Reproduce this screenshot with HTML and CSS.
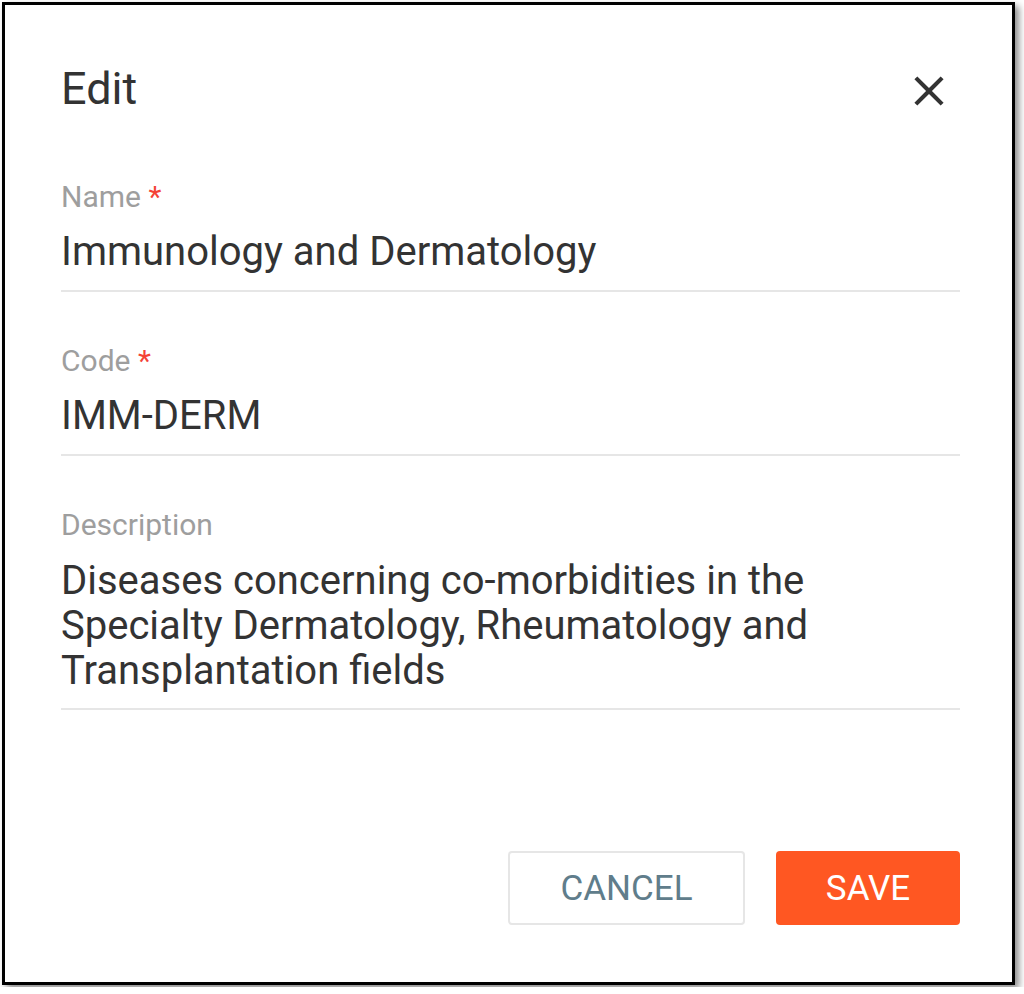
FILE: index.html
```html
<!DOCTYPE html>
<html lang="en">
<head>
<meta charset="utf-8">
<title>Edit</title>
<link rel="stylesheet" href="styles.css">
</head>
<body>
<div class="frame">
  <div class="dialog">
    <div class="dialog-header">
      <h1 class="dialog-title">Edit</h1>
      <button class="close-btn" aria-label="Close">
        <svg viewBox="0 0 24 24" width="50" height="50"><path fill="#333" d="M19 6.41L17.59 5 12 10.59 6.41 5 5 6.41 10.59 12 5 17.59 6.41 19 12 13.41 17.59 19 19 17.59 13.41 12z"/></svg>
      </button>
    </div>
    <div class="field">
      <div class="label">Name <span class="req">*</span></div>
      <div class="value">Immunology and Dermatology</div>
    </div>
    <div class="field">
      <div class="label">Code <span class="req">*</span></div>
      <div class="value">IMM-DERM</div>
    </div>
    <div class="field field-desc">
      <div class="label">Description</div>
      <div class="value value-multi">Diseases concerning co-morbidities in the<br>Specialty Dermatology, Rheumatology and<br>Transplantation fields</div>
    </div>
    <div class="actions">
      <button class="btn btn-cancel">CANCEL</button>
      <button class="btn btn-save">SAVE</button>
    </div>
  </div>
</div>
</body>
</html>
```
FILE: styles.css
```css
html, body {
  margin: 0;
  padding: 0;
  background: #fff;
}
body {
  font-family: Roboto, "Noto Sans", "Liberation Sans", sans-serif;
  color: #333;
}
.frame {
  box-sizing: border-box;
  margin: 2px;
  width: 1013px;
  height: 983px;
  border: 3px solid #000;
  background: #fff;
  box-shadow: 4px 4px 7px rgba(0, 0, 0, 0.45);
}
.dialog {
  box-sizing: border-box;
  height: 100%;
  display: flex;
  flex-direction: column;
  padding: 58.6px 52px 57px 56px;
}
.dialog-header {
  display: flex;
  justify-content: space-between;
  align-items: flex-start;
  margin-bottom: 64px;
}
.dialog-title {
  margin: 0;
  font-size: 45px;
  line-height: 50px;
  font-weight: 400;
  color: #333;
}
.close-btn {
  border: 0;
  background: none;
  padding: 0;
  margin: 2px 6px 0 0;
  width: 50px;
  height: 50px;
  cursor: pointer;
}
.close-btn svg {
  display: block;
}
.field {
  border-bottom: 2px solid #e6e6e6;
  padding-bottom: 14px;
}
.field + .field {
  margin-top: 52px;
}
.label {
  font-size: 30px;
  line-height: 34px;
  color: #9e9e9e;
  margin-bottom: 14px;
}
.req {
  color: #f44336;
}
.value {
  font-size: 40px;
  line-height: 48px;
  color: #333;
}
.value-multi {
  line-height: 45px;
}
.field-desc {
  padding-bottom: 15px;
}
.field-desc .label {
  margin-bottom: 16px;
}
.actions {
  margin-top: auto;
  display: flex;
  justify-content: flex-end;
  gap: 31px;
}
.btn {
  font-family: Roboto, "Noto Sans", "Liberation Sans", sans-serif;
  font-size: 35px;
  font-weight: 400;
  height: 74px;
  border-radius: 4px;
  cursor: pointer;
  padding: 0;
}
.btn-cancel {
  width: 237px;
  background: #fff;
  border: 2px solid #e6e6e6;
  color: #607d8b;
}
.btn-save {
  width: 184px;
  background: #ff5722;
  border: 0;
  color: #fff;
}
```
